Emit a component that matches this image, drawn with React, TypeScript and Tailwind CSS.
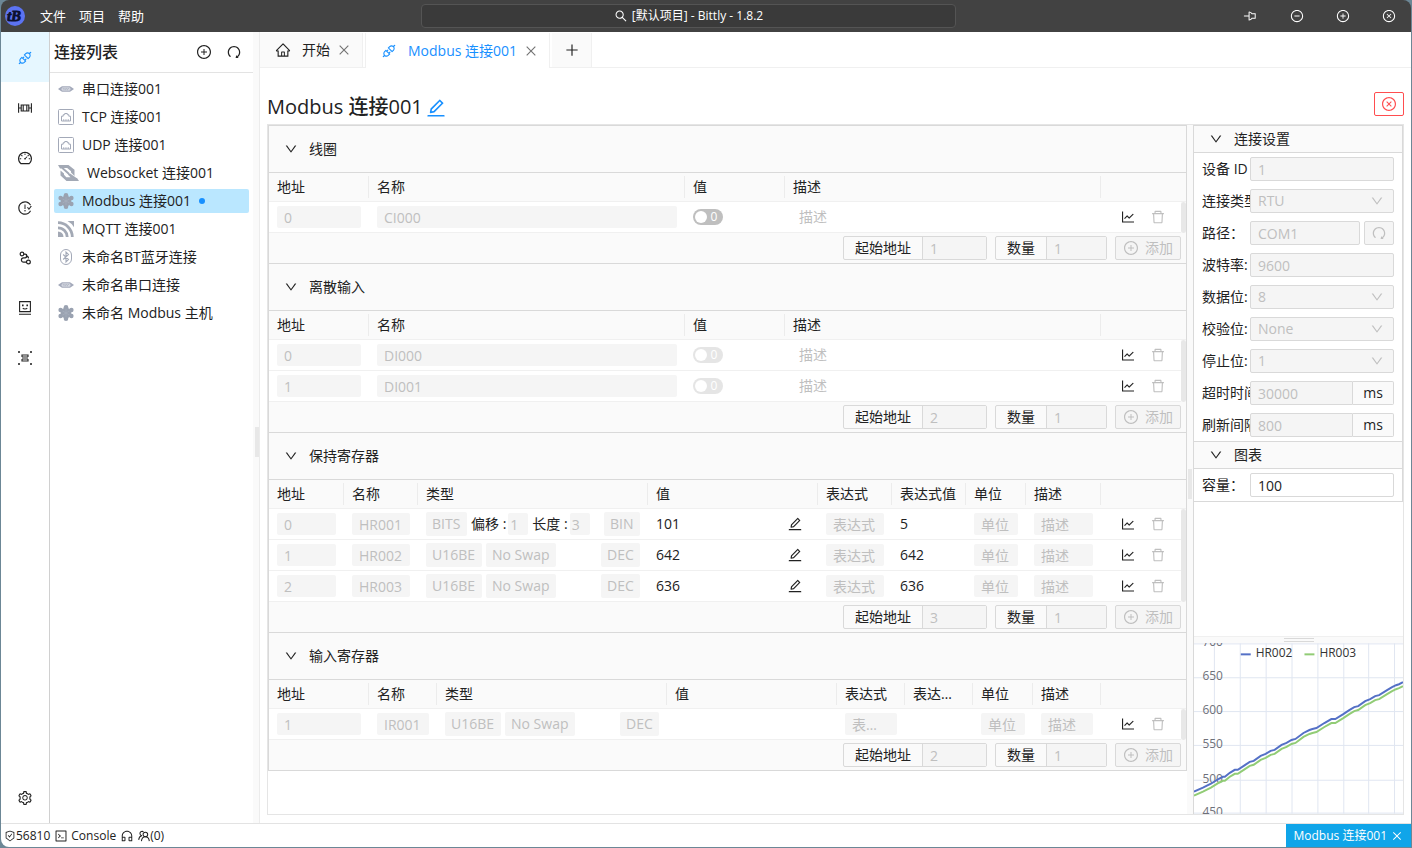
import type { ReactNode } from "react";
import {
  AiOutlineApi,
  AiOutlineClose,
  AiOutlineCloseCircle,
  AiOutlineCode,
  AiOutlineCustomerService,
  AiOutlineDashboard,
  AiOutlineDelete,
  AiOutlineDown,
  AiOutlineEdit,
  AiOutlineHome,
  AiOutlineIssuesClose,
  AiOutlineLineChart,
  AiOutlineMinusCircle,
  AiOutlinePlus,
  AiOutlinePlusCircle,
  AiOutlinePushpin,
  AiOutlineRedo,
  AiOutlineSafetyCertificate,
  AiOutlineSearch,
  AiOutlineSetting,
} from "react-icons/ai";

function LogoIcon() {
  return (
    <svg viewBox="0 0 20 20" className="size-5 shrink-0">
      <circle cx="10" cy="10" r="10" fill="#5c73f2" />
      <text x="9" y="15" fontSize="15" fontWeight="700" fontStyle="italic" fontFamily="Liberation Serif, serif" textAnchor="middle" fill="#0b1030" stroke="#0b1030" strokeWidth="0.8">
        tB
      </text>
    </svg>
  );
}

function FrameIcon() {
  return (
    <svg viewBox="0 0 14 14" className="size-3.5" fill="none" stroke="currentColor" strokeWidth="1.1">
      <path d="M.6 2.2v9.6M13.4 2.2v9.6M.6 7h2.6M10.8 7h2.6" />
      <path d="M3.2 4h7.6v6H3.2zM5.2 4v6M8.8 4v6" />
    </svg>
  );
}

function NodesIcon() {
  return (
    <svg viewBox="0 0 14 14" className="size-3.5" fill="none" stroke="currentColor" strokeWidth="1.2">
      <circle cx="4" cy="3" r="1.8" />
      <circle cx="10.4" cy="11" r="1.9" />
      <path d="M5.8 3.2h1.3a1.8 1.8 0 0 1 0 3.6H5.6a2.2 2.2 0 0 0 0 4.4h2.8M7.8 5.2c2-.2 2.8.8 2.6 2.2" />
    </svg>
  );
}

function FaceIcon() {
  return (
    <svg viewBox="0 0 14 14" className="size-3.5" fill="none" stroke="currentColor" strokeWidth="1.1">
      <path d="M1.6.6h10.8v10H1.6zM1 13.2h12M4.8 7.2c.8 1 3.6 1 4.4 0" />
      <path d="M4 4.4h1.6M8.4 4.4H10" strokeWidth="1.6" />
    </svg>
  );
}

function ScanIcon() {
  return (
    <svg viewBox="0 0 14 14" className="size-3.5" fill="none" stroke="currentColor" strokeWidth="1.1">
      <path d="M3.4 4h7.2M4 6h6M4 8h6M3.4 10h7.2M4 4v2M10 4v2M4 8v2M10 8v2" />
      <path d="M0 1h2M1 0v2M12 1h2M13 0v2M0 13h2M1 12v2M12 13h2M13 12v2" />
    </svg>
  );
}

function UsersIcon() {
  return (
    <svg viewBox="0 0 14 14" className="size-3" fill="none" stroke="currentColor" strokeWidth="1.2">
      <circle cx="8.6" cy="5.2" r="2.7" />
      <path d="M4 13c.3-3 2-5 4.6-5s4.3 2 4.6 5M4.8 6.6a2.5 2.5 0 1 1 1.6-4.4M.8 11.5c.2-2.5 1.4-4.2 3.4-4.8" />
    </svg>
  );
}

function SerialIcon() {
  return (
    <svg viewBox="0 0 16 16" className="size-4 shrink-0">
      <path d="M0 8l2.5-1.8L4 5.2h8l1.5 1L16 8l-2.5 1.8-1.5 1H4l-1.5-1z" fill="#a3a9ba" />
      <rect x="3.5" y="6.2" width="9" height="3.6" rx="1.5" fill="#d3d6df" />
      <path d="M4.8 7.4h6.5M5.5 8.7h5" stroke="#a3a9ba" strokeWidth=".8" strokeDasharray="1 .7" />
    </svg>
  );
}

function PortIcon() {
  return (
    <svg viewBox="0 0 16 16" className="size-4 shrink-0" fill="none" stroke="#a3a9b8">
      <rect x=".5" y=".5" width="15" height="15" rx="1" />
      <path d="M3.5 12V7.2h1.7V5.700h1.500V4.500h2.600v1.200h1.500v1.500h1.700V12z" />
      <path d="M5.5 10.2V12M7.2 10.2V12M8.9 10.2V12M10.5 10.2V12" strokeWidth=".7" />
    </svg>
  );
}

function SocketIcon() {
  return (
    <svg viewBox="0 0 21 16" className="h-4 w-[21px] shrink-0" fill="#a3a9b5">
      <path d="M0 0h10.5L16.5 4.8V11L13 7.5V6.3L9.2 3H5.8l5.4 4.8v2.7L3.5 3.6H2z" />
      <path d="M2.5 5.5L6 8.5v1.3l2.3 2.4h4.2l-2.4-2.4 1.6-1.5L18.5 13H19l2 3H8.5l-6-5.5z" />
    </svg>
  );
}

function ModbusIcon() {
  return (
    <svg viewBox="0 0 16 16" className="size-4 shrink-0" fill="#9aa2b1">
      <circle cx="8" cy="8" r="5.4" />
      <circle cx="8" cy="2.3" r="2.3" />
      <circle cx="8" cy="13.7" r="2.3" />
      <circle cx="2.6" cy="5" r="2.2" />
      <circle cx="13.4" cy="5" r="2.2" />
      <circle cx="2.6" cy="11" r="2.2" />
      <circle cx="13.4" cy="11" r="2.2" />
      <path d="M8 4v8M4.5 6l7 4M11.5 6l-7 4" stroke="#aab1bf" strokeWidth=".6" />
    </svg>
  );
}

function MqttIcon() {
  return (
    <svg viewBox="0 0 16 16" className="size-4 shrink-0" fill="none" stroke="#a3a9b5">
      <path d="M0 10.5A5.5 5.5 0 0 1 5.5 16H0z" fill="#a3a9b5" stroke="none" />
      <path d="M0 6.8A9.2 9.2 0 0 1 9.2 16M0 1.7A14.3 14.3 0 0 1 14.3 16" strokeWidth="2.8" />
      <path d="M9.5 0H16v6.2A17 17 0 0 0 9.5 0z" fill="#a3a9b5" stroke="none" />
    </svg>
  );
}

function BluetoothIcon() {
  return (
    <svg viewBox="0 0 16 16" className="size-4 shrink-0" fill="none" stroke="#a3a9b8">
      <rect x="2.5" y=".5" width="11" height="15" rx="5.5" />
      <path d="M5.2 5.5l5.3 5L8 13V3l2.5 2.5-5.3 5" strokeWidth="1.1" />
    </svg>
  );
}

const connections = [
  { name: "串口连接001", icon: <SerialIcon /> },
  { name: "TCP 连接001", icon: <PortIcon /> },
  { name: "UDP 连接001", icon: <PortIcon /> },
  { name: "Websocket 连接001", icon: <SocketIcon /> },
  { name: "Modbus 连接001", icon: <ModbusIcon />, active: true },
  { name: "MQTT 连接001", icon: <MqttIcon /> },
  { name: "未命名BT蓝牙连接", icon: <BluetoothIcon /> },
  { name: "未命名串口连接", icon: <SerialIcon /> },
  { name: "未命名 Modbus 主机", icon: <ModbusIcon /> },
];

const navItems = [
  { label: "连接", icon: <AiOutlineApi className="size-4" />, active: true },
  { label: "面板", icon: <FrameIcon /> },
  { label: "仪表盘", icon: <AiOutlineDashboard className="size-4" /> },
  { label: "测试", icon: <AiOutlineIssuesClose className="size-4" /> },
  { label: "流程", icon: <NodesIcon /> },
  { label: "模拟", icon: <FaceIcon /> },
  { label: "工具", icon: <ScanIcon /> },
];

function TitleBar() {
  return (
    <header className="flex h-8 shrink-0 items-center rounded-t-lg bg-[#424242] text-white">
      <div className="flex flex-1 items-center pl-1">
        <LogoIcon />
        <nav className="ml-[15px] flex gap-[13px] text-[13px]">
          <button>文件</button>
          <button>项目</button>
          <button>帮助</button>
        </nav>
      </div>
      <button className="flex h-6 w-[38%] items-center justify-center gap-1 rounded border border-[#545454] bg-[#3a3a3a] text-xs">
        <AiOutlineSearch className="size-3.5" />
        [默认项目] - Bittly - 1.8.2
      </button>
      <div className="ml-6 flex flex-1 justify-end gap-8 pr-[15px] text-sm">
        <button aria-label="置顶"><AiOutlinePushpin className="rotate-45" /></button>
        <button aria-label="最小化"><AiOutlineMinusCircle /></button>
        <button aria-label="最大化"><AiOutlinePlusCircle /></button>
        <button aria-label="关闭"><AiOutlineCloseCircle /></button>
      </div>
    </header>
  );
}

function Sidebar() {
  return (
    <aside className="flex w-[203px] shrink-0 flex-col">
      <div className="flex h-[41px] items-center border-b border-[#e3e3e3] pr-[11px] pl-1">
        <h2 className="flex-1 text-base font-medium">连接列表</h2>
        <button aria-label="新建连接"><AiOutlinePlusCircle className="size-4" /></button>
        <button aria-label="刷新" className="ml-3.5"><AiOutlineRedo className="size-4" /></button>
      </div>
      <ul className="flex flex-col gap-1 px-1 pt-1">
        {connections.map((c) => (
          <li key={c.name}>
            <button className={`flex h-6 w-full items-center gap-2 rounded-xs px-1 ${c.active ? "bg-[#bae7ff]" : ""}`}>
              {c.icon}
              {c.name}
              {c.active && <span className="size-1.5 rounded-full bg-[#1890ff]" />}
            </button>
          </li>
        ))}
      </ul>
    </aside>
  );
}

function Tabs() {
  return (
    <div className="flex h-9 shrink-0 gap-0.5 border-b border-[#f0f0f0] pt-px">
      <div className="flex items-center border-r border-[#f0f0f0] bg-[#fafafa] pr-[11px] pl-[15px]">
        <AiOutlineHome className="size-4" />
        <a href="#home" className="ml-[11px]">开始</a>
        <button aria-label="关闭标签" className="ml-[7px] text-neutral-500"><AiOutlineClose className="size-3.5" /></button>
      </div>
      <div className="-mb-px flex items-center border-x border-[#f0f0f0] bg-white pr-[11px] pl-[15px] text-[#1890ff]">
        <AiOutlineApi className="size-4" />
        <a href="#modbus" className="ml-[11px]">Modbus 连接001</a>
        <button aria-label="关闭标签" className="ml-[7px] text-neutral-500"><AiOutlineClose className="size-3.5" /></button>
      </div>
      <button aria-label="新标签" className="flex w-10 items-center justify-center border-r border-[#f0f0f0] bg-[#fafafa]">
        <AiOutlinePlus className="size-4" />
      </button>
    </div>
  );
}

const fieldClass = "block h-[22px] w-full min-w-0 text-ellipsis rounded-xs bg-[#f5f5f5] px-[7px] text-[#bfbfbf] placeholder:text-[#bfbfbf]";

function Field({ label, value, placeholder }: { label: string; value?: string; placeholder?: string }) {
  return <input disabled aria-label={label} defaultValue={value} placeholder={placeholder} className={fieldClass} />;
}

function Tag({ value }: { value: string }) {
  return (
    <select disabled aria-label="类型" className="h-6 appearance-none rounded-xs bg-[#f5f5f5] px-1.5 text-[#bfbfbf] opacity-100">
      <option>{value}</option>
    </select>
  );
}

function BitInput({ label, value }: { label: string; value: string }) {
  return (
    <label className="flex items-center gap-0.5">
      {label} :
      <input disabled defaultValue={value} className="h-[22px] w-5 rounded-xs bg-[#f5f5f5] px-0.5 text-[#bfbfbf]" />
    </label>
  );
}

function TypeCell({ type, bits, format }: { type: string; bits?: boolean; format: string }) {
  return (
    <div className="flex items-center gap-1">
      <Tag value={type} />
      {bits ? (
        <>
          <BitInput label="偏移" value="1" />
          <BitInput label="长度" value="3" />
        </>
      ) : (
        <Tag value="No Swap" />
      )}
      <span className="flex-1" />
      <Tag value={format} />
    </div>
  );
}

function ValueCell({ value }: { value: string }) {
  return (
    <div className="flex items-center justify-between pr-[7px]">
      {value}
      <button aria-label="编辑值"><AiOutlineEdit className="size-4" /></button>
    </div>
  );
}

function Toggle({ faded }: { faded?: boolean }) {
  return (
    <button
      role="switch"
      aria-checked="false"
      disabled={faded}
      className={`flex h-4 w-[30px] items-center rounded-full bg-[#bfbfbf] px-0.5 text-xs text-white ${faded ? "opacity-40" : ""}`}
    >
      <span className="size-3 rounded-full bg-white" />
      <span className="flex-1 text-center font-medium">0</span>
    </button>
  );
}

function AddonInput({ label, value, narrow }: { label: string; value: string; narrow?: boolean }) {
  return (
    <label className="flex h-6 items-center rounded-xs border border-[#d9d9d9] bg-[#fafafa]">
      <span className="px-[11px]">{label}</span>
      <input
        disabled
        defaultValue={value}
        className={`h-full border-l border-[#d9d9d9] bg-[#f5f5f5] px-[7px] text-[#bfbfbf] ${narrow ? "w-[60px]" : "w-16"}`}
      />
    </label>
  );
}

interface Column {
  title: string;
  width?: number;
}

interface SectionProps {
  title: string;
  columns: Column[];
  rows: ReactNode[][];
  start: string;
}

function Section({ title, columns, rows, start }: SectionProps) {
  return (
    <section>
      <h3 className="border-b border-[#d9d9d9]">
        <button className="flex h-[46px] w-full items-center gap-[11px] px-[15px] text-left">
          <AiOutlineDown className="size-3.5" />
          {title}
        </button>
      </h3>
      <table className="w-full table-fixed border-separate border-spacing-0">
        <colgroup>
          {columns.map((c, i) => (
            <col key={i} style={{ width: c.width }} />
          ))}
          <col className="w-20" />
          <col className="w-[5px]" />
        </colgroup>
        <thead>
          <tr>
            {columns.map((c, i) => (
              <th key={i} className="h-[29px] border-b border-[#f0f0f0] p-0 text-left font-normal">
                <div className="truncate border-r border-[#ececec] px-2 leading-[22px]">{c.title}</div>
              </th>
            ))}
            <th className="border-b border-[#f0f0f0]" />
            <th className="border-b border-[#f0f0f0]" />
          </tr>
        </thead>
        <tbody className="bg-white">
          {rows.map((cells, r) => (
            <tr key={r}>
              {cells.map((cell, i) => (
                <td key={i} className="h-[31px] border-b border-[#f0f0f0] px-2 py-0">{cell}</td>
              ))}
              <td className="border-b border-[#f0f0f0] py-0 pr-0 pl-[19px]">
                <div className="flex gap-3.5">
                  <button aria-label="图表"><AiOutlineLineChart className="size-4" /></button>
                  <button aria-label="删除" disabled className="text-[#bfbfbf]"><AiOutlineDelete className="size-4" /></button>
                </div>
              </td>
              {r === 0 && <td rowSpan={rows.length} className="rounded-sm bg-[#e8e8e8] p-0" />}
            </tr>
          ))}
        </tbody>
      </table>
      <div className="flex h-[31px] items-center justify-end gap-2 border-b border-[#d9d9d9] pr-[5px]">
        <AddonInput label="起始地址" value={start} />
        <AddonInput label="数量" value="1" narrow />
        <button disabled className="flex h-6 items-center gap-1.5 rounded-xs border border-[#d9d9d9] bg-[#f5f5f5] px-[7px] text-[#bfbfbf]">
          <AiOutlinePlusCircle className="size-4" />
          添加
        </button>
      </div>
    </section>
  );
}

const bitColumns: Column[] = [
  { title: "地址", width: 100 },
  { title: "名称" },
  { title: "值", width: 100 },
  { title: "描述" },
];

const holdingColumns: Column[] = [
  { title: "地址", width: 75 },
  { title: "名称", width: 74 },
  { title: "类型", width: 230 },
  { title: "值" },
  { title: "表达式", width: 74 },
  { title: "表达式值", width: 74 },
  { title: "单位", width: 60 },
  { title: "描述", width: 75 },
];

const inputColumns: Column[] = [
  { title: "地址", width: 100 },
  { title: "名称", width: 68 },
  { title: "类型", width: 230 },
  { title: "值" },
  { title: "表达式", width: 68 },
  { title: "表达式值", width: 68 },
  { title: "单位", width: 60 },
  { title: "描述", width: 68 },
];

function bitRow(address: string, name: string, faded?: boolean) {
  return [
    <Field label="地址" value={address} />,
    <Field label="名称" value={name} />,
    <Toggle faded={faded} />,
    <span className="pl-1.5 text-[#bfbfbf]">描述</span>,
  ];
}

function holdingRow(address: string, name: string, type: string, format: string, value: string, result: string) {
  return [
    <Field label="地址" value={address} />,
    <Field label="名称" value={name} />,
    <TypeCell type={type} bits={type === "BITS"} format={format} />,
    <ValueCell value={value} />,
    <Field label="表达式" placeholder="表达式" />,
    result,
    <Field label="单位" placeholder="单位" />,
    <Field label="描述" placeholder="描述" />,
  ];
}

function Registers() {
  return (
    <div className="min-w-0 flex-1 self-start border border-[#d9d9d9] border-b-0 bg-[#fafafa]">
      <Section title="线圈" columns={bitColumns} start="1" rows={[bitRow("0", "CI000")]} />
      <Section title="离散输入" columns={bitColumns} start="2" rows={[bitRow("0", "DI000", true), bitRow("1", "DI001", true)]} />
      <Section
        title="保持寄存器"
        columns={holdingColumns}
        start="3"
        rows={[
          holdingRow("0", "HR001", "BITS", "BIN", "101", "5"),
          holdingRow("1", "HR002", "U16BE", "DEC", "642", "642"),
          holdingRow("2", "HR003", "U16BE", "DEC", "636", "636"),
        ]}
      />
      <Section
        title="输入寄存器"
        columns={inputColumns}
        start="2"
        rows={[
          [
            <Field label="地址" value="1" />,
            <Field label="名称" value="IR001" />,
            <TypeCell type="U16BE" format="DEC" />,
            null,
            <Field label="表达式" placeholder="表达式" />,
            null,
            <Field label="单位" placeholder="单位" />,
            <Field label="描述" placeholder="描述" />,
          ],
        ]}
      />
    </div>
  );
}

const boxClass = "h-6 w-full min-w-0 flex-1 border border-[#d9d9d9] px-[7px]";
const disabledClass = "bg-[#f5f5f5] text-[#bfbfbf] opacity-100";

interface SettingProps {
  label: string;
  value: string;
  kind?: "select" | "port" | "ms" | "plain";
}

function Setting({ label, value, kind }: SettingProps) {
  return (
    <div className="flex h-6 items-center">
      <label htmlFor={label} className="w-12 shrink-0 overflow-hidden whitespace-nowrap">{label}</label>
      {kind === "select" ? (
        <div className="relative flex flex-1">
          <select id={label} disabled className={`appearance-none rounded-xs ${boxClass} ${disabledClass}`}>
            <option>{value}</option>
          </select>
          <AiOutlineDown className="absolute top-[5px] right-2.5 size-3.5 text-[#bfbfbf]" />
        </div>
      ) : (
        <input
          id={label}
          disabled={kind !== "plain"}
          defaultValue={value}
          className={`${boxClass} ${kind === "ms" ? "rounded-l-xs" : "rounded-xs"} ${kind === "plain" ? "bg-white" : disabledClass}`}
        />
      )}
      {kind === "port" && (
        <button disabled aria-label="刷新端口" className="ml-1 flex h-6 w-[30px] items-center justify-center rounded-xs border border-[#d9d9d9] bg-[#f5f5f5] text-[#bfbfbf]">
          <AiOutlineRedo className="size-4" />
        </button>
      )}
      {kind === "ms" && (
        <span className="flex h-6 w-[41px] items-center justify-center rounded-r-xs border border-l-0 border-[#d9d9d9] bg-[#fafafa]">ms</span>
      )}
    </div>
  );
}

function PanelHeader({ title }: { title: string }) {
  return (
    <h3 className="border-b border-[#d9d9d9] bg-[#fafafa]">
      <button className="flex h-[26px] w-full items-center gap-[11px] px-[15px] text-left">
        <AiOutlineDown className="size-3.5" />
        {title}
      </button>
    </h3>
  );
}

const trend = [
  [0, 149], [9, 145], [17, 141], [25, 136], [29, 134], [31, 134], [36, 130], [41, 127], [44, 127], [50, 123],
  [56, 119], [60, 118], [67, 113], [72, 111], [77, 108], [81, 107], [88, 102], [93, 100], [98, 97], [102, 96],
  [110, 90], [116, 87], [119, 86], [123, 85], [131, 80], [138, 76], [142, 76], [150, 71], [156, 67], [161, 64],
  [165, 63], [172, 58], [177, 56], [182, 53], [186, 52], [194, 47], [199, 44], [203, 42], [206, 41], [210, 39],
];
const gridX = [20, 46, 72, 98, 124, 150, 175, 201];
const ticks = [
  { label: "700", y: 0 },
  { label: "650", y: 34 },
  { label: "600", y: 68 },
  { label: "550", y: 102 },
  { label: "500", y: 137 },
  { label: "450", y: 170 },
];

function Chart() {
  const line = trend.map(([x, y]) => `${x},${y}`).join(" ");
  const lower = trend.map(([x, y]) => `${x},${y + 4}`).join(" ");
  return (
    <svg viewBox="0 0 210 171" className="block h-[171px] w-full overflow-hidden" fontSize="12" fill="#6e7079">
      <g stroke="#e0e6f1">
        {gridX.map((x) => (
          <line key={x} x1={x + 0.5} x2={x + 0.5} y1="0" y2="171" />
        ))}
        {ticks.map((t) => (
          <line key={t.label} x1="0" x2="210" y1={t.y + 0.5} y2={t.y + 0.5} />
        ))}
      </g>
      {ticks.map((t) => (
        <text key={t.label} x="29" y={t.y + 3} textAnchor="end">{t.label}</text>
      ))}
      <polyline points={line} fill="none" stroke="#5470c6" strokeWidth="2" />
      <polyline points={lower} fill="none" stroke="#91cc75" strokeWidth="2" />
      <path d="M47 11h10" stroke="#5470c6" strokeWidth="2" />
      <path d="M111 11h10" stroke="#91cc75" strokeWidth="2" />
      <text x="62" y="14" fill="#333">HR002</text>
      <text x="126" y="14" fill="#333">HR003</text>
    </svg>
  );
}

function SettingsPanel() {
  return (
    <aside className="flex w-[209px] shrink-0 flex-col">
      <div className="border border-l-0 border-[#d9d9d9]">
        <PanelHeader title="连接设置" />
        <div className="flex flex-col gap-2 border-b border-[#d9d9d9] px-2 py-1">
          <Setting label="设备 ID" value="1" />
          <Setting label="连接类型:" value="RTU" kind="select" />
          <Setting label="路径：" value="COM1" kind="port" />
          <Setting label="波特率:" value="9600" />
          <Setting label="数据位:" value="8" kind="select" />
          <Setting label="校验位:" value="None" kind="select" />
          <Setting label="停止位:" value="1" kind="select" />
          <Setting label="超时时间:" value="30000" kind="ms" />
          <Setting label="刷新间隔:" value="800" kind="ms" />
        </div>
        <PanelHeader title="图表" />
        <div className="px-2 py-1">
          <Setting label="容量：" value="100" kind="plain" />
        </div>
      </div>
      <div className="flex-1" />
      <div className="flex h-[7px] items-center justify-center border-t border-[#f0f0f0] bg-[#fafafa]">
        <span className="h-1 w-[30px] border-y border-[#d9d9d9]" />
      </div>
      <Chart />
    </aside>
  );
}

function StatusBar() {
  return (
    <footer className="flex h-6 shrink-0 items-center border-t border-[#e3e3e3] pl-[3px] text-xs">
      <AiOutlineSafetyCertificate className="size-3" />
      56810
      <button className="ml-1 flex items-center gap-[3px]">
        <AiOutlineCode className="size-3.5" />
        Console
      </button>
      <button aria-label="客服" className="ml-1"><AiOutlineCustomerService className="size-3.5" /></button>
      <button className="ml-1 flex items-center"><UsersIcon />(0)</button>
      <span className="flex-1" />
      <div className="flex h-full items-center gap-1 bg-[#10a5e9] px-2 text-white">
        Modbus 连接001
        <button aria-label="关闭"><AiOutlineClose className="size-3" /></button>
      </div>
    </footer>
  );
}

export default function App() {
  return (
    <div className="flex h-screen flex-col bg-[#6c8796] px-px pb-px font-['Open_Sans','Noto_Sans_CJK_SC',sans-serif] text-sm text-[#222]">
      <TitleBar />
      <div className="flex min-h-0 flex-1 flex-col rounded-b-lg bg-white">
        <div className="flex min-h-0 flex-1">
          <nav className="flex w-[49px] shrink-0 flex-col border-r border-[#d0d0d0]">
            {navItems.map((n) => (
              <button
                key={n.label}
                aria-label={n.label}
                className={`flex h-[50px] items-center justify-center pt-0.5 ${n.active ? "bg-[#e6f7ff] text-[#1890ff]" : ""}`}
              >
                {n.icon}
              </button>
            ))}
            <button aria-label="设置" className="mt-auto flex h-[50px] items-center justify-center">
              <AiOutlineSetting className="size-4" />
            </button>
          </nav>
          <Sidebar />
          <div className="flex w-[7px] shrink-0 items-center justify-end border-r border-[#ececec] bg-[#fafafa]">
            <span className="mt-7 h-[30px] w-1 bg-[#e8e8e8]" />
          </div>
          <main className="flex min-w-0 flex-1 flex-col">
            <Tabs />
            <div className="flex min-h-0 flex-1 flex-col px-[7px] pt-6 pb-2">
              <div className="flex h-8 shrink-0 items-start">
                <h1 className="text-xl leading-[30px] font-medium">Modbus 连接001</h1>
                <button aria-label="重命名" className="mt-[5px] ml-0.5 text-[#1890ff]"><AiOutlineEdit className="size-[22px]" /></button>
                <button aria-label="断开连接" className="ml-auto flex h-6 w-[30px] items-center justify-center rounded-xs border border-[#ff4d4f] text-[#ff4d4f]">
                  <AiOutlineCloseCircle className="size-4" />
                </button>
              </div>
              <div className="flex min-h-0 flex-1 border border-[#e5e5e5]">
                <Registers />
                <div className="flex w-[7px] shrink-0 items-center justify-center border-r border-[#d9d9d9] bg-[#fafafa]">
                  <span className="mt-7 h-[30px] w-1 bg-[#e8e8e8]" />
                </div>
                <SettingsPanel />
              </div>
            </div>
          </main>
        </div>
        <StatusBar />
      </div>
    </div>
  );
}
